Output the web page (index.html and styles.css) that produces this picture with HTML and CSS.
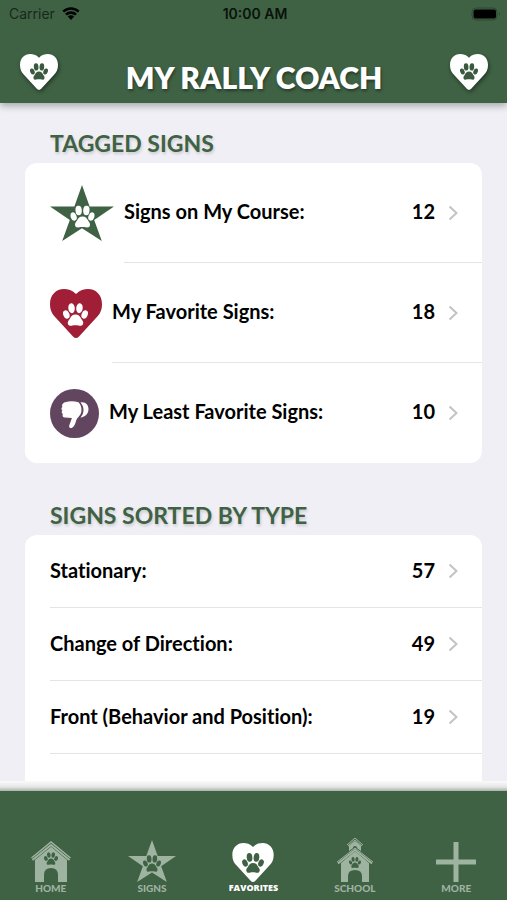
FILE: index.html
```html
<!DOCTYPE html>
<html lang="en">
<head>
<meta charset="utf-8">
<meta name="viewport" content="width=device-width, initial-scale=1">
<title>My Rally Coach</title>
<link rel="stylesheet" href="styles.css">
</head>
<body>
<svg class="defs" aria-hidden="true">
  <symbol id="paw" viewBox="0 0 24 22">
    <ellipse cx="8.2" cy="4.900" rx="3.1" ry="4.800" transform="rotate(-5 8.2 4.9)"/>
    <ellipse cx="15.8" cy="4.900" rx="3.1" ry="4.800" transform="rotate(5 15.8 4.9)"/>
    <ellipse cx="3.200" cy="11" rx="2.900" ry="4.200" transform="rotate(-22 3.2 11)"/>
    <ellipse cx="20.800" cy="11" rx="2.900" ry="4.200" transform="rotate(22 20.8 11)"/>
    <path d="M12 11c3 0 4.500 2 5.600 4.200 1.300 1.800 2.200 3 1.700 4.700-.5 1.900-2.200 2.200-3.600 1.800-2.500-.6-4.900-.6-7.400 0-1.400.4-3.100.1-3.600-1.800-.5-1.700.4-2.900 1.700-4.700C7.500 13 9 11 12 11z"/>
  </symbol>
  <symbol id="heart" viewBox="0 0 52 49">
    <path d="M26 5C30 1 34 0 38 0c8 0 14 6 14 15 0 6-2 10-6 14L29 47.500c-2 2-4 2-6 0L6 29C2 25 0 21 0 15 0 6 6 0 14 0c4 0 8 1 12 5z"/>
  </symbol>
  <symbol id="star" viewBox="0 0 63 55">
    <path d="M31.500 0l7.500 21H63L43.500 34.500 51 55 31.500 42.500 12 55l7.500-20.500L0 21h24z"/>
  </symbol>
</svg>

<header class="header">
  <div class="status">
    <span class="carrier">Carrier
      <svg class="wifi" viewBox="0 0 18 13" aria-hidden="true">
        <path d="M1.300 4.600a11 11 0 0 1 15.400 0M4 7.700a7 7 0 0 1 10 0" fill="none" stroke="currentColor" stroke-width="2.600"/>
        <path d="M5.800 9.600a4.500 4.500 0 0 1 6.400 0L9 13z"/>
      </svg>
    </span>
    <span class="clock">10:00 AM</span>
    <svg class="battery" viewBox="0 0 30 14" aria-hidden="true">
      <rect x="1" y="1" width="25" height="12" rx="4" fill="none" stroke="#2c4932" stroke-width="1"/>
      <rect x="2.500" y="2.500" width="22.500" height="9" rx="2"/>
      <path d="M28 5.500v3l1.500-1.500z" fill="#2c4932"/>
    </svg>
  </div>
  <div class="titlebar">
    <svg class="badge" viewBox="0 0 38 36" aria-hidden="true"><use href="#heart" width="38" height="36" fill="#fff"/><use href="#paw" x="10" y="9" width="18" height="17" fill="#3a5a3f"/></svg>
    <h1>MY RALLY COACH</h1>
    <svg class="badge" viewBox="0 0 38 36" aria-hidden="true"><use href="#heart" width="38" height="36" fill="#fff"/><use href="#paw" x="10" y="9" width="18" height="17" fill="#3a5a3f"/></svg>
  </div>
</header>

<main class="content">
  <section>
    <h2>TAGGED SIGNS</h2>
    <div class="card tall">
      <a class="row" href="#course">
        <svg class="icon-star" viewBox="0 0 63 55" aria-hidden="true"><use href="#star" width="63" height="55" fill="#3f6244"/><use href="#paw" x="20" y="20" width="24" height="22" fill="#fff"/></svg>
        <span class="line"><span class="label">Signs on My Course:</span><span class="count">12</span><svg class="chevron" viewBox="0 0 10 16"><path d="M1.500 1.500L8.500 8l-7 6.500"/></svg></span>
      </a>
      <a class="row" href="#favorite">
        <svg class="icon-heart" viewBox="0 0 52 49" aria-hidden="true"><use href="#heart" width="52" height="49" fill="#a01f36"/><use href="#paw" x="13" y="14" width="25" height="23" fill="#fff"/></svg>
        <span class="line"><span class="label">My Favorite Signs:</span><span class="count">18</span><svg class="chevron" viewBox="0 0 10 16"><path d="M1.500 1.500L8.500 8l-7 6.500"/></svg></span>
      </a>
      <a class="row" href="#least">
        <svg class="icon-thumb" viewBox="0 0 49 49" aria-hidden="true">
          <circle cx="24.500" cy="24.500" r="24.500" fill="#62455f"/>
          <path fill="#fff" d="M15 13.200q7-1.800 13.500 0c2.500 2.500 3.500 6 2.800 9.800-.8 4-4 5-5.200 8.700-.8 3.200-1.800 6-4.300 7.200-1.800.7-3.200-.8-2.500-2.700l2.600-7.200-7-.4c-2 0-3-1.700-2-3.600-1.500-.8-1.500-2.500-.5-3.500-1.300-1-1.200-2.700 0-3.500-1-1.800.6-4.400 2.600-4.800z"/>
          <path fill="#fff" d="M30.500 13.500c5-1 8 2.500 8 6.500 0 4.500-3 8-8 8.500 4-4.500 4-10.500 0-15z"/>
        </svg>
        <span class="line"><span class="label">My Least Favorite Signs:</span><span class="count">10</span><svg class="chevron" viewBox="0 0 10 16"><path d="M1.500 1.500L8.500 8l-7 6.500"/></svg></span>
      </a>
    </div>
  </section>
  <section>
    <h2>SIGNS SORTED BY TYPE</h2>
    <div class="card">
      <a class="row" href="#stationary"><span class="line"><span class="label">Stationary:</span><span class="count">57</span><svg class="chevron" viewBox="0 0 10 16"><path d="M1.500 1.500L8.500 8l-7 6.500"/></svg></span></a>
      <a class="row" href="#direction"><span class="line"><span class="label">Change of Direction:</span><span class="count">49</span><svg class="chevron" viewBox="0 0 10 16"><path d="M1.500 1.500L8.500 8l-7 6.500"/></svg></span></a>
      <a class="row" href="#front"><span class="line"><span class="label">Front (Behavior and Position):</span><span class="count">19</span><svg class="chevron" viewBox="0 0 10 16"><path d="M1.500 1.500L8.500 8l-7 6.500"/></svg></span></a>
      <div class="row"></div>
    </div>
  </section>
</main>

<nav class="tabs">
  <a class="tab" href="#home">
    <svg viewBox="0 0 42 42" width="42" height="42" aria-hidden="true">
      <path d="M5 19L21 6l16 13v23h-9V35q0-7-7-7t-7 7v7H5z"/>
      <path d="M2 18.500L21 3l19 15.500" fill="none" stroke="#3f6244" stroke-width="6"/>
      <path d="M1.500 18L21 2l19.500 16" fill="none" stroke="currentColor" stroke-width="1.500"/>
      <path d="M2.500 20L21 5l18.500 15" fill="none" stroke="currentColor" stroke-width="2"/>
      <use href="#paw" x="14" y="12" width="14" height="13" fill="#3f6244"/>
    </svg>
    <span>HOME</span>
  </a>
  <a class="tab" href="#signs">
    <svg viewBox="0 0 48 42" width="48" height="42" aria-hidden="true"><use href="#star" width="48" height="42"/><use href="#paw" x="15" y="15" width="18" height="17" fill="#3f6244"/></svg>
    <span>SIGNS</span>
  </a>
  <a class="tab active" href="#favorites" aria-current="page">
    <svg viewBox="0 0 42 39" width="42" height="39" aria-hidden="true"><use href="#heart" width="42" height="39"/><use href="#paw" x="10" y="10" width="22" height="20" fill="#3f6244"/></svg>
    <span>FAVORITES</span>
  </a>
  <a class="tab" href="#school">
    <svg viewBox="0 0 38 45" width="38" height="45" aria-hidden="true">
      <path d="M13 8l6-5 6 5v9H13z"/>
      <path d="M12 7.500l7-5.500 7 5.500" fill="none" stroke="#3f6244" stroke-width="3"/>
      <path d="M11 8l8-7 8 7" fill="none" stroke="currentColor" stroke-width="1"/>
      <path d="M12 9l7-6 7 6" fill="none" stroke="currentColor" stroke-width="1"/>
      <path d="M17 14v-3q0-2 2-2t2 2v3z" fill="#3f6244"/>
      <path d="M5 26l14-12 14 12v19h-7V39q0-6-7-6t-7 6v6H5z"/>
      <path d="M2 25L19 12l17 13" fill="none" stroke="#3f6244" stroke-width="4"/>
      <path d="M1 25L19 11l18 14" fill="none" stroke="currentColor" stroke-width="1"/>
      <path d="M2 26.500L19 13l17 13.500" fill="none" stroke="currentColor" stroke-width="2"/>
      <use href="#paw" x="13" y="20" width="12" height="11" fill="#3f6244"/>
    </svg>
    <span>SCHOOL</span>
  </a>
  <a class="tab" href="#more">
    <svg viewBox="0 0 40 40" width="40" height="40" aria-hidden="true"><path d="M17.500 0h5v17.500H40v5H22.500V40h-5V22.500H0v-5h17.500z"/></svg>
    <span>MORE</span>
  </a>
</nav>
</body>
</html>
```
FILE: styles.css
```css
* {
  box-sizing: border-box;
}

body {
  margin: 0;
  height: 100vh;
  display: flex;
  flex-direction: column;
  overflow: hidden;
  background: #f0eff5;
  color: #000;
  font-family: Lato, "Open Sans", sans-serif;
  font-variant-ligatures: none;
}

a {
  color: inherit;
  text-decoration: none;
}

svg {
  display: block;
  flex: none;
}

.defs {
  position: absolute;
  width: 0;
  height: 0;
}

.header {
  position: relative;
  z-index: 1;
  flex: none;
  background: #3f6244;
  box-shadow: 0 3px 7px rgba(0, 0, 0, 0.3);
}

.status {
  display: grid;
  grid-template-columns: 1fr auto 1fr;
  align-items: center;
  height: 27px;
  padding: 0 6px 0 9px;
  color: #0a120b;
  font: 14px/20px Inter, sans-serif;
}

.carrier {
  display: flex;
  align-items: center;
  gap: 7px;
  color: #18281b;
}

.wifi {
  width: 18px;
  height: 13px;
  color: #000;
}

.clock {
  font-weight: 600;
}

.battery {
  width: 30px;
  height: 14px;
  justify-self: end;
}

.titlebar {
  display: flex;
  align-items: center;
  justify-content: space-between;
  height: 76px;
  padding: 24px 19px 0 20px;
}

.badge {
  width: 38px;
  height: 36px;
  margin-bottom: 10px;
  filter: drop-shadow(1px 2px 2px rgba(0, 0, 0, 0.45));
}

h1 {
  margin: 0;
  color: #fff;
  font-size: 30px;
  font-weight: 800;
  line-height: 36px;
  text-shadow: 1px 2px 3px rgba(0, 0, 0, 0.4);
}

.content {
  flex: 1;
  min-height: 0;
  overflow: hidden;
  padding: 24px 25px 0;
}

h2 {
  margin: 0;
  padding: 0 25px 3px;
  color: #3f6244;
  font-size: 23px;
  font-weight: 700;
  line-height: 33px;
  text-shadow: 1px 2px 3px rgba(0, 0, 0, 0.16);
}

section + section {
  margin-top: 36px;
}

.card {
  overflow: hidden;
  border-radius: 12px;
  background: #fff;
}

.row {
  display: flex;
  align-items: center;
  gap: 10px;
  height: 73px;
  padding-left: 25px;
}

.tall .row {
  height: 100px;
}

.line {
  display: flex;
  flex: 1;
  align-items: center;
  height: 100%;
  padding: 0 24px 3px 0;
  border-bottom: 1px solid #e4e4e6;
  font-size: 20px;
  font-weight: 700;
  line-height: 24px;
}

.row:last-child .line {
  border-bottom-color: transparent;
}

.label {
  flex: 1;
}

.chevron {
  width: 10px;
  height: 16px;
  margin: 3px 0 0 13px;
  fill: none;
  stroke: #c3c3c6;
  stroke-width: 2;
}

.icon-star {
  width: 64px;
  height: 56px;
}

.icon-heart {
  width: 52px;
  height: 49px;
}

.icon-thumb {
  width: 49px;
  height: 49px;
}

.tabs {
  position: relative;
  display: grid;
  grid-template-columns: repeat(5, 1fr);
  flex: none;
  height: 109px;
  padding-bottom: 6px;
  background: #3f6244;
}

.tabs::before {
  content: "";
  position: absolute;
  right: 0;
  bottom: 100%;
  left: 0;
  height: 10px;
  background: linear-gradient(#fbfbfb, #e3e5e3 60%, #a9b2aa);
}

.tab {
  display: flex;
  flex-direction: column;
  align-items: center;
  justify-content: flex-end;
  color: #9fb3a1;
  fill: currentColor;
  font-size: 10px;
  font-weight: 900;
  line-height: 12px;
}

.tab.active {
  color: #fff;
  font: 800 9px/12px "Open Sans", sans-serif;
}
```
